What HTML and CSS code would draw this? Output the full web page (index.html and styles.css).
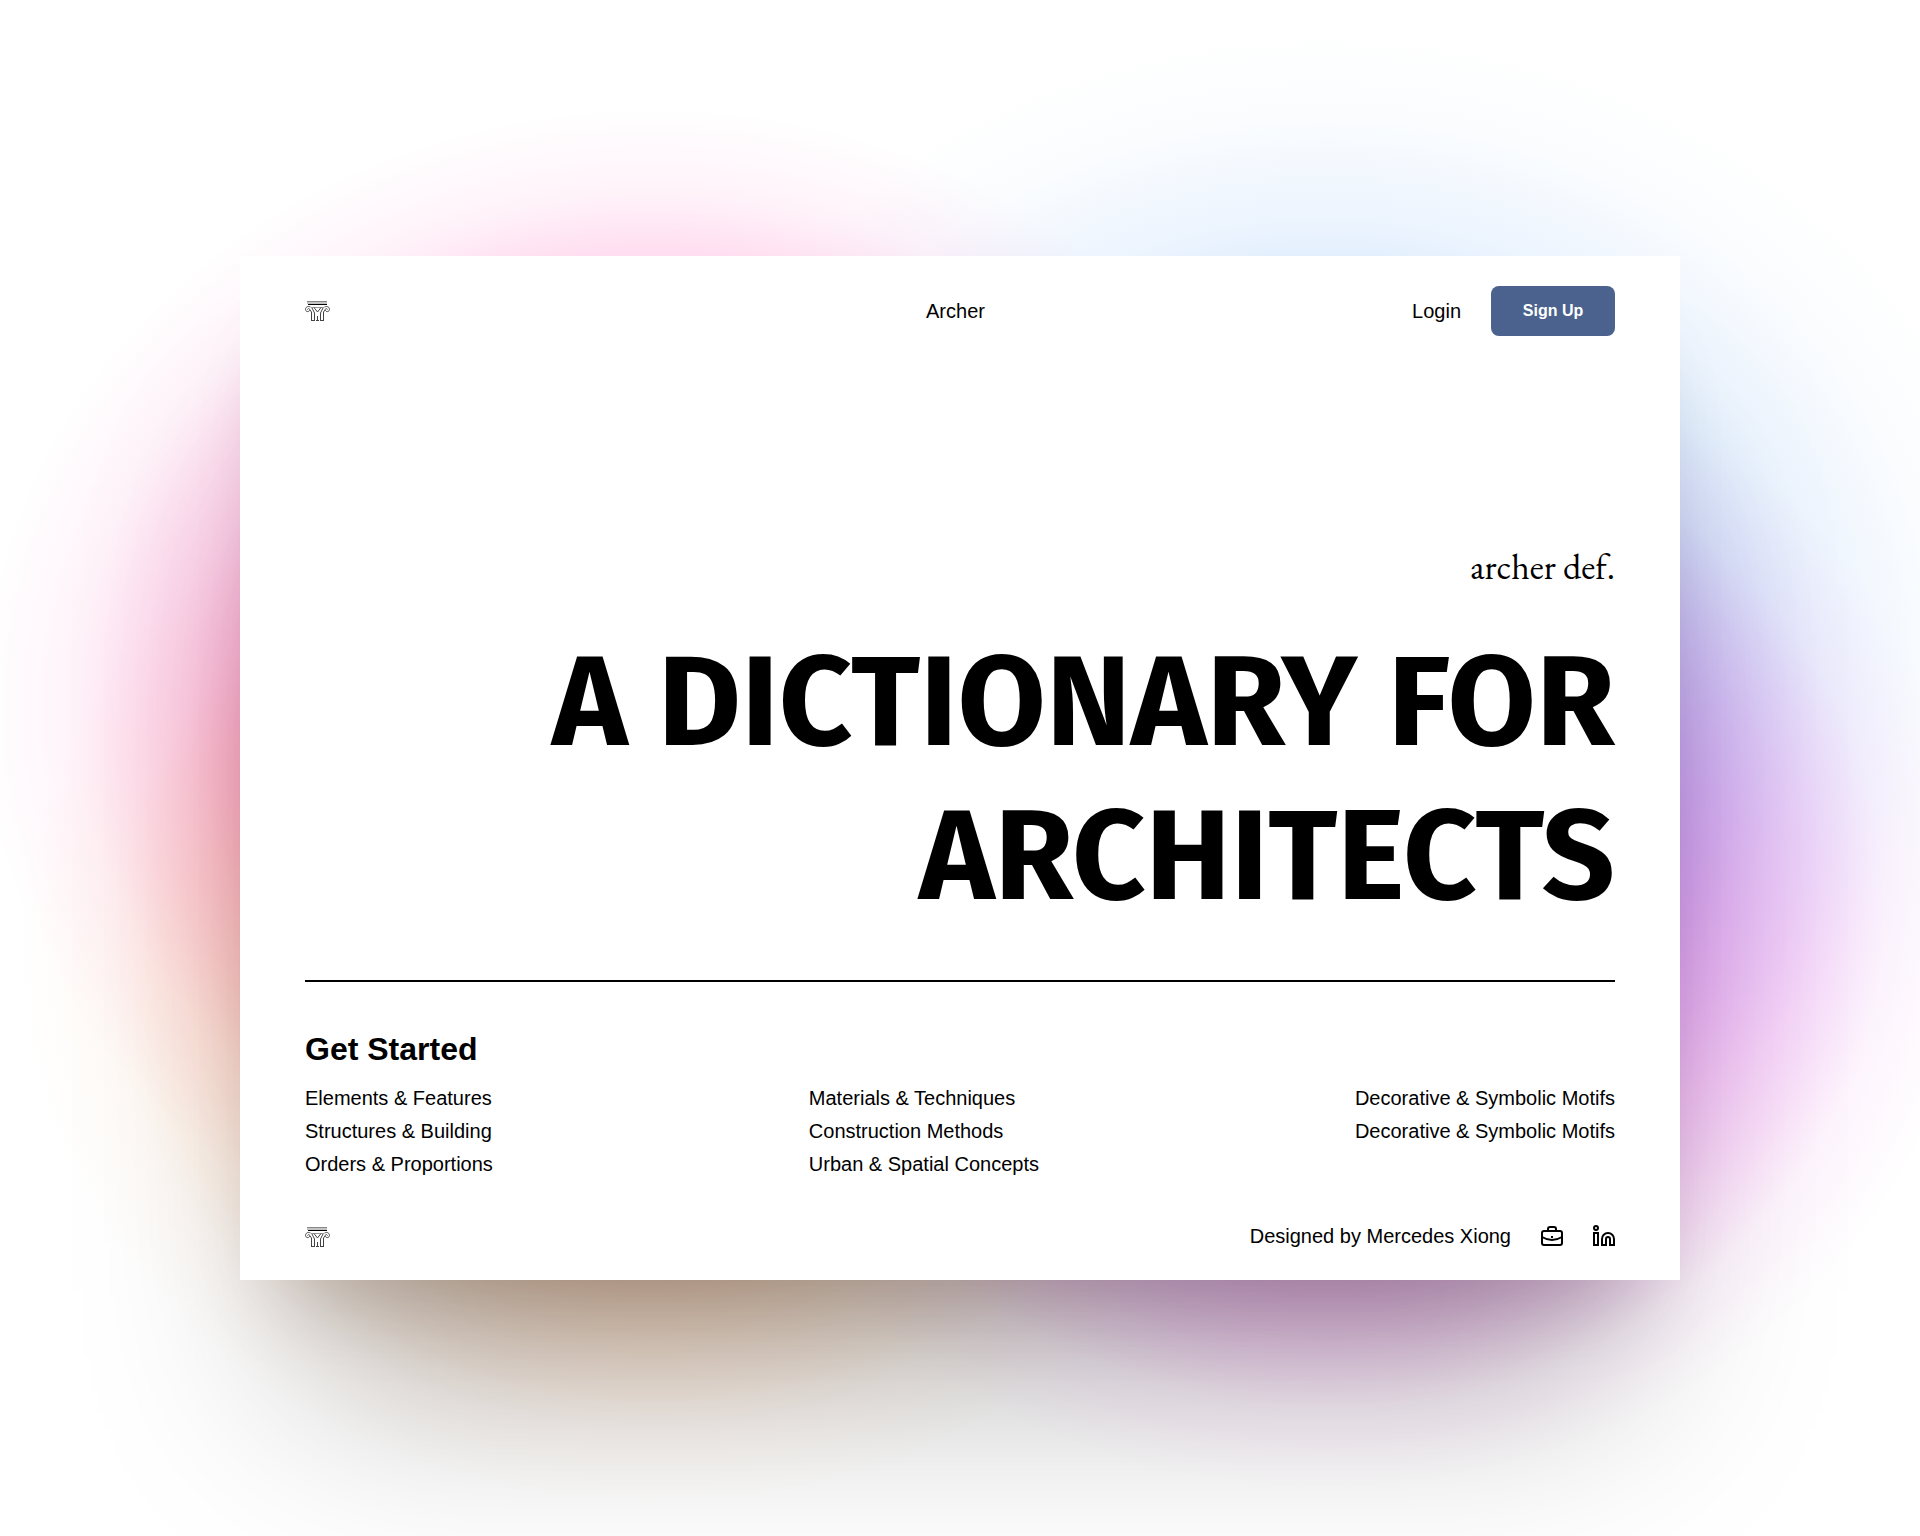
FILE: index.html
```html
<!DOCTYPE html>
<html lang="en">
<head>
<meta charset="utf-8">
<title>Archer</title>
<link rel="stylesheet" href="styles.css">
</head>
<body>
<svg class="sprite" aria-hidden="true">
  <symbol id="column" viewBox="0 0 25 22">
    <g fill="none" stroke="#444" stroke-width="1">
      <path d="M2 1.500H22M2 3H22" stroke="#888"/>
      <path d="M3 4.500H22" stroke="#000"/>
      <path d="M6 7.500H19" stroke="#999"/>
      <path d="M5.500 7C2.500 5.500.500 7.500.500 9.500S3.500 12.500 4.500 10.500 3 8 2.500 9.500M19.500 7C22.500 5.500 24.500 7.500 24.500 9.500S21.500 12.500 20.500 10.500 22 8 22.500 9.500"/>
      <path d="M6.500 20.500V12L5 10M9.500 20.500V13L7 8M18.500 20.500V12L20 10M15.500 20.500V13L18 8M12.500 20.500V16M6 20.500H10M11 20.500H14M15 20.500H19M9 7.500 12.500 12 16 7.500"/>
    </g>
  </symbol>
</svg>
<main class="card">
  <header class="topbar">
    <a class="logo" href="#" aria-label="Archer home"><svg width="25" height="22"><use href="#column"/></svg></a>
    <a href="#">Archer</a>
    <nav class="account">
      <a href="#">Login</a>
      <button class="signup" type="button">Sign Up</button>
    </nav>
  </header>
  <section class="hero">
    <p class="term">archer def.</p>
    <h1 class="title">A DICTIONARY FOR<br>ARCHITECTS</h1>
  </section>
  <section class="start">
    <h2 class="subtitle">Get Started</h2>
    <div class="topics">
      <ul>
        <li><a href="#">Elements &amp; Features</a></li>
        <li><a href="#">Structures &amp; Building</a></li>
        <li><a href="#">Orders &amp; Proportions</a></li>
      </ul>
      <ul>
        <li><a href="#">Materials &amp; Techniques</a></li>
        <li><a href="#">Construction Methods</a></li>
        <li><a href="#">Urban &amp; Spatial Concepts</a></li>
      </ul>
      <ul>
        <li><a href="#">Decorative &amp; Symbolic Motifs</a></li>
        <li><a href="#">Decorative &amp; Symbolic Motifs</a></li>
      </ul>
    </div>
  </section>
  <footer class="footer">
    <a class="logo" href="#" aria-label="Archer home"><svg width="25" height="22"><use href="#column"/></svg></a>
    <div class="credits">
      <span>Designed by Mercedes Xiong</span>
      <a href="#" aria-label="Portfolio"><svg width="24" height="24" viewBox="0 0 24 24" fill="none" stroke="#000" stroke-width="2"><rect x="3" y="6" width="20" height="14" rx="2"/><path d="M9 6V4Q9 2 11 2H15Q17 2 17 4V6M3 12Q13 18 23 12M13 11V13"/></svg></a>
      <a href="#" aria-label="LinkedIn"><svg width="24" height="24" viewBox="0 0 24 24" fill="none" stroke="#000" stroke-width="2"><circle cx="5" cy="3" r="2"/><path d="M3 8H7V20H3ZM11 20V14A6 6 0 0 1 23 14V20H19V14A2 2 0 0 0 15 14V20Z"/></svg></a>
    </div>
  </footer>
</main>
</body>
</html>
```
FILE: styles.css
```css
* { box-sizing: border-box; }

body {
  margin: 0;
  min-height: 100vh;
  padding: 256px 12.5%;
  background-color: #fff;
  background-image:
    radial-gradient(35% 39% at 34% 46%, rgb(255 50 165), rgb(255 50 165 / .82) 30%, rgb(255 50 165 / .5) 50%, rgb(255 50 165 / .22) 70%, rgb(255 50 165 / .06) 86%, rgb(255 50 165 / 0)),
    radial-gradient(37% 41% at 69% 43%, rgb(160 200 250), rgb(160 200 250 / .82) 30%, rgb(160 200 250 / .5) 50%, rgb(160 200 250 / .2) 70%, rgb(160 200 250 / .05) 86%, rgb(160 200 250 / 0)),
    radial-gradient(34% 38% at 69% 59%, rgb(230 70 225), rgb(230 70 225 / .82) 30%, rgb(230 70 225 / .5) 50%, rgb(230 70 225 / .26) 70%, rgb(230 70 225 / .06) 86%, rgb(230 70 225 / 0)),
    radial-gradient(33% 36% at 34% 62%, rgb(255 170 100), rgb(255 170 100 / .82) 30%, rgb(255 170 100 / .5) 50%, rgb(255 170 100 / .24) 70%, rgb(255 170 100 / .06) 86%, rgb(255 170 100 / 0));
  background-blend-mode: multiply;
  color: #000;
  font: 20px/33px "Liberation Sans", Arial, sans-serif;
}

.sprite { position: absolute; width: 0; height: 0; }
a { color: inherit; text-decoration: none; }
h1, h2, p, ul { margin: 0; padding: 0; }
ul { list-style: none; }
svg { display: block; }

.card {
  padding: 30px 65px 27px;
  background: #fff;
  box-shadow:
    0 60px 80px -40px rgb(0 0 0 / .15),
    0 170px 200px -60px rgb(0 0 0 / .28);
}

.topbar {
  display: grid;
  grid-template-columns: 69fr auto 70fr;
  align-items: center;
}

.account {
  display: flex;
  justify-content: flex-end;
  align-items: center;
  gap: 30px;
}

.signup {
  width: 124px;
  height: 50px;
  border: 0;
  border-radius: 8px;
  background: #4a628d;
  color: #fff;
  font: bold 16px "Liberation Sans", Arial, sans-serif;
}

.hero {
  padding: 207px 0 47px;
  border-bottom: 2px solid #000;
  text-align: right;
}

.term { font: 36px/48px "EB Garamond", "Liberation Serif", serif; }

.title {
  margin-top: 34px;
  font: bold 128px/154px "Fira Sans", Lato, sans-serif;
}

.start { padding-top: 47px; }
.subtitle { font-size: 32px; line-height: 40px; margin-bottom: 13px; }

.topics {
  display: flex;
  justify-content: space-between;
}

.footer {
  display: flex;
  justify-content: space-between;
  align-items: center;
  margin-top: 39px;
}

.credits {
  display: flex;
  align-items: center;
  gap: 28px;
}
```
